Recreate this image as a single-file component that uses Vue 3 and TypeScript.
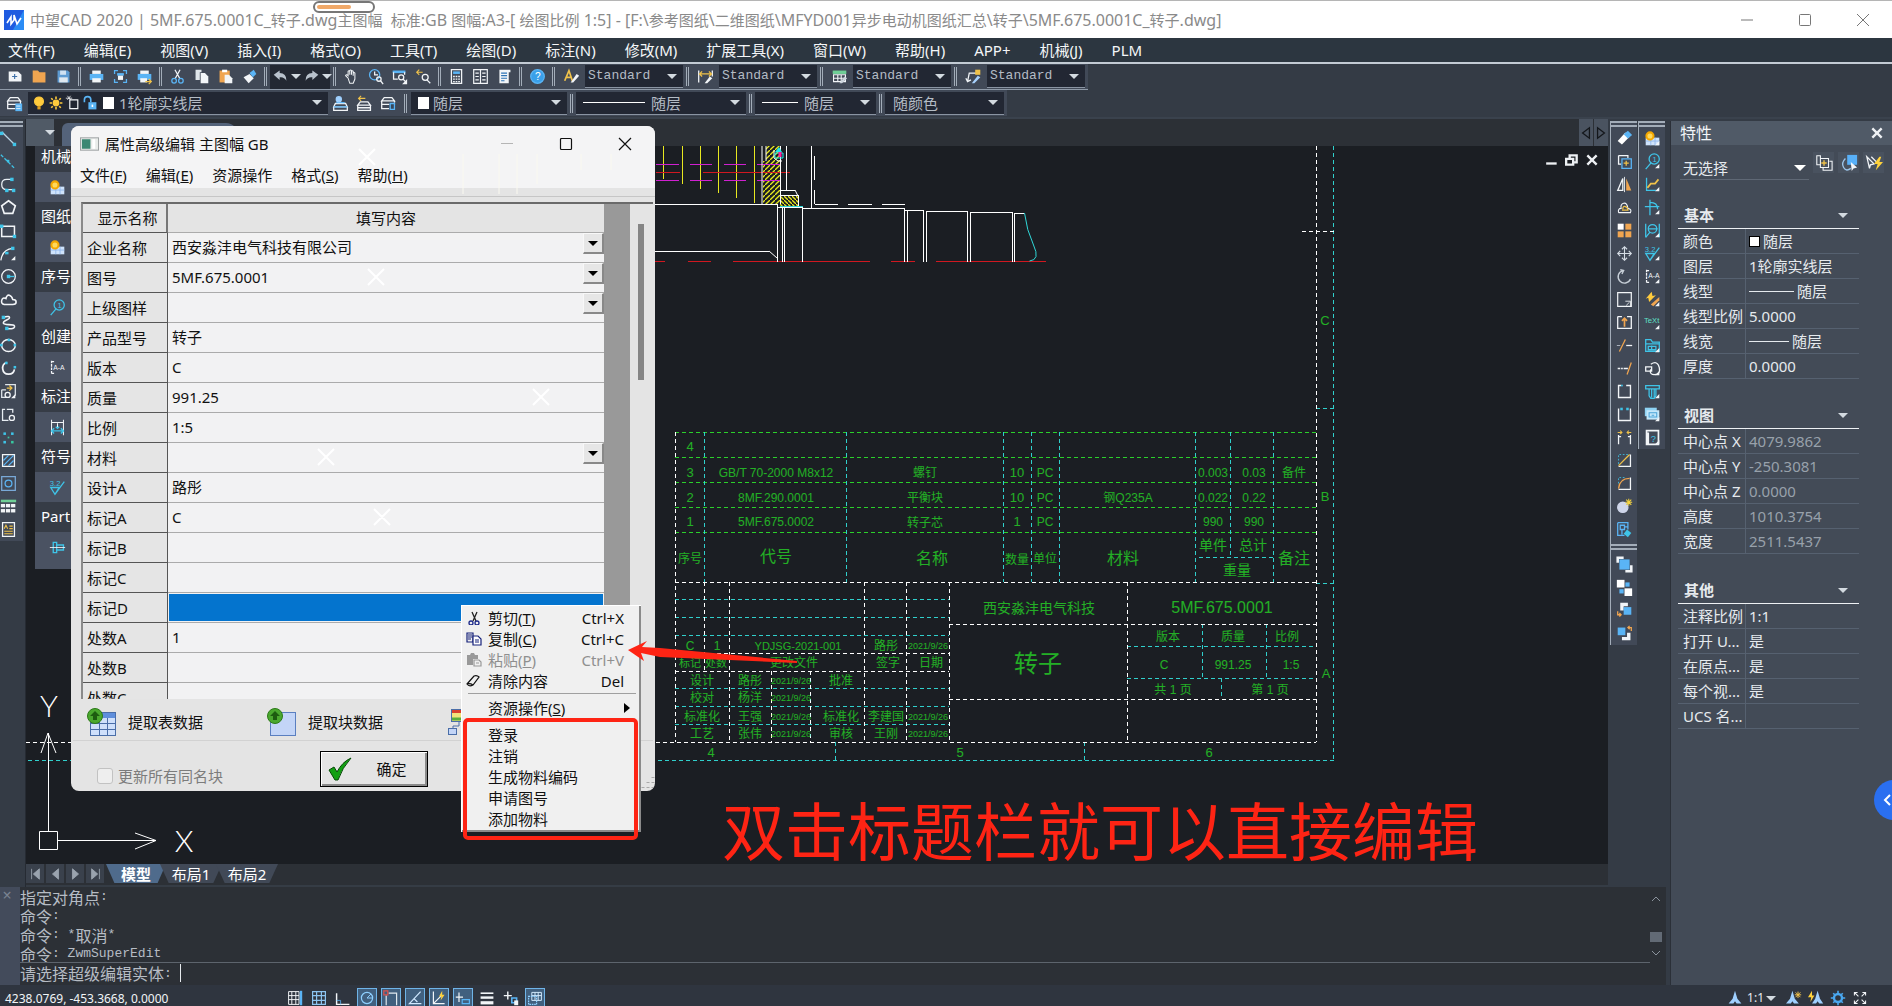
<script setup lang="ts">
import { ref } from 'vue'

type Line = [number, number, number, number]
type Label = [number, number, string, number?]

const W = '#f2f5f8'
const B = '#5ab4f5'
const C = '#3fc4e8'
const Y = '#f0c24a'
const O = '#f0a550'
const G = '#b9c2cc'

const s = (d: string, c = W, w = 1.5) => `<path d="${d}" fill="none" stroke="${c}" stroke-width="${w}"/>`
const f = (d: string, c = W) => `<path d="${d}" fill="${c}"/>`
const o = (x: number, y: number, r: number, c = W, fill = 'none', w = 1.5) =>
  `<circle cx="${x}" cy="${y}" r="${r}" fill="${fill}" stroke="${c}" stroke-width="${w}"/>`
const q = (x: number, y: number, w: number, h: number, c = W) => `<rect x="${x}" y="${y}" width="${w}" height="${h}" fill="${c}"/>`
const t = (x: number, y: number, n: string, c: string, z = 8) =>
  `<text x="${x}" y="${y}" font-size="${z}" font-family="Liberation Sans, sans-serif" fill="${c}">${n}</text>`
const more = f('M18 13v5h-5z')

const sheets = q(2, 9, 16, 9, '#cfe3fb') + s('M8 9v9M2 13h16M13 9v9', '#8fb6ea', 1) + o(7, 7, 4.2, '#f5a800', '#ffd95c', 2.4)

const icons: Record<string, string> = {
  new: f('M2 4h11l4 4v8H2z') + s('M9 7v6M6 10h6', '#3d6fa8', 1.3),
  open: f('M2 3h6l2 2h7v12H2z', O),
  save: f('M3 3h12l2 2v12H3z', '#5e9bd2') + q(6, 3, 7, 5, '#cfe1f2') + q(5, 11, 10, 6, '#dfe8f0'),
  print: q(5, 3, 10, 4, W) + q(2, 7, 16, 7, B) + q(5, 12, 10, 5, W),
  preview: s('M3 7V3h4M13 3h4v4M17 13v4h-4M7 17H3v-4', B) + q(6, 6, 8, 3, B) + q(7, 9, 6, 5, W),
  publish: q(5, 3, 10, 4, W) + q(2, 7, 16, 7, B) + q(5, 12, 8, 5, W) + s('M11 16h7M15 13l3 3-3 3', Y),
  cut: s('M7 2l6 11M13 2L7 13', W) + o(6, 15, 2.7, B) + o(14, 15, 2.7, B),
  copy: f('M3 2h7v3H8v9H3z', '#dfe5ea') + f('M9 6h5l4 4v8H9z'),
  paste: q(3, 3, 12, 14, O) + q(6, 2, 6, 3, '#fff') + f('M9 8h5l4 4v6H9z'),
  brush: f('M3 11l7-4 5 5-6 6z') + f('M10 6l5-4 3 5-4 4z', B),
  undo: f('M2 8l7-5v3q8 0 8 9-3-5-8-4v3z', G),
  redo: f('M18 8l-7-5v3q-8 0-8 9 3-5 8-4v3z', G),
  hand: s('M6 12L3 9q1-2 3 0V4q1-1.500 2 0v4V3q1-1.500 2 0v5V4q1-1.500 2 0v5V6q1-1.500 2 0v7l-2 5H8z', W, 1.2),
  zoomrt: o(9, 8, 6, B) + s('M9 4v4h4', W) + o(14, 13, 2.600) + s('M16 15l3 4'),
  zoomwin: q(2, 3, 15, 3, B) + s('M3 5v8h5M16 5v3') + o(12, 11, 3) + s('M14 13l3 3') + f('M19 13v6h-6z'),
  zoomprev: s('M2 5h7M5 2L2 5l3 3', Y, 1.3) + o(12, 11, 3.500) + s('M14 14l4 4'),
  calc: s('M4 2h12v16H4z') + q(6, 4, 8, 3, B) + s('M6 10h8M6 13h8M6 16h8', W, 1.500).replace('/>', ' stroke-dasharray="2 1"/>'),
  grid: s('M2 2h16v16H2zM10 2v16M4 6h4M4 10h4M4 14h4M12 6h4M12 10h4M12 14h4', W, 1.400),
  sheet: f('M4 2h13v3H15v13H4z') + s('M6 6h7M6 9h7M6 12h7M6 15h4', '#2e74b5', 1.300),
  help: o(10, 10, 8, B, '#3aa0ea') + t(7, 14, '?', '#fff', 12),
  textstyle: s('M2 15L7 3l4 12M4 11h6', Y, 2) + f('M9 17l7-10 3 2-7 8z'),
  dimstyle: s('M2 3v14M18 3v7') + s('M3 7h14M6 4L3 7l3 3M14 4l3 3-3 3', Y) + f('M9 18l6-8 3 2-6 6z'),
  tablestyle: q(2, 3, 16, 4, '#6fcf97') + s('M3 8h14v8H3zM3 12h14M8 8v8M12 8v8', W, 1.300) + f('M10 18l6-8 3 2-6 6z', '#cdd5dd'),
  leaderstyle: s('M3 16L5 6h8M1 12l2 4 4-2') + q(12, 2, 6, 6, Y) + f('M8 18l7-9 3 2-7 7z', '#a9d3ff'),
  layers: s('M5 3h9l3 4H2zM2 7v4h15V7M2 11v5h9') + q(11, 10, 8, 9, B) + s('M12 13h5M12 16h5', W, 1),
  bulb: o(10, 8, 5.500, '#ffcb3d', '#ffcb3d') + q(8, 14, 4, 4, '#e0a020'),
  sun: o(10, 10, 3.500, '#ffcb3d', '#ffcb3d') + s('M10 2v3M10 15v3M2 10h3M15 10h3M4 4l2 2M14 14l2 2M16 4l-2 2M4 16l2-2', '#ffcb3d', 2),
  frame: s('M6 6h10v11H6z', W) + s('M3 1l4 5M7 1L3 6M1 4h8', W, 1),
  unlock: s('M3 9V6q0-4 4-4t4 4v3', B, 2) + q(8, 9, 10, 9, B) + q(12, 12, 2, 3, '#fff'),
  lay1: s('M4 10h12l2 4H2zM2 14v4h16v-4') + s('M5 9h10M2 14h16', B) + o(8, 5, 3, '#9fd0ff', '#9fd0ff'),
  lay2: s('M5 8h9l3 4H2zM2 12v6h15v-6M2 15h15') + s('M3 4h8M6 1L3 4l3 3', Y, 1.300),
  lay3: s('M5 3h9l3 4H2zM2 7v4h15V7M2 11v5h9') + q(11, 9, 7, 9, '#39485a') + s('M12 10h5v7h-5z', B),
  line: s('M2 2l16 16', '#b9d3e4') + q(0, 2, 4, 4, C) + q(15, 15, 4, 4, C),
  xline: s('M1 2l17 17', C).replace('/>', ' stroke-dasharray="4 2"/>') + q(8, 8, 3, 3, C),
  pline: s('M13 4H8q-6 0-6 6t6 6h7', '#e8eef3') + q(12, 2, 4, 4, C) + q(6, 15, 4, 4, C) + q(14, 15, 4, 4, C),
  polygon: s('M10 2l8 6-3 9H5L2 8z', W, 2),
  rect: s('M2 5h15v12H2z', W, 1.800) + q(0, 3, 4, 4, C) + q(15, 15, 4, 4, C),
  arc: s('M1 18Q3 5 15 4') + q(13, 2, 4, 4, C) + q(6, 8, 4, 3, C) + more,
  circle: o(10, 10, 8) + s('M10 10h7', C) + q(8, 8, 4, 4, C),
  cloud: s('M5 16q-4-1-3-5t5-2q1-5 4-4t4 5q4 0 4 3t-4 3z', W, 1.800),
  spline: s('M4 4c5-2 8-1 7 1S3 8 4 11s12 0 13 3-4 4-9 3', W, 1.800) + q(2, 2, 4, 4, C) + q(6, 15, 4, 4, C),
  ellipse: s('M2 10a8 7 0 1 0 16 0a8 7 0 1 0-16 0', W, 1.800) + q(0, 8, 3, 3, C) + q(16, 8, 3, 3, C) + q(9, 2, 3, 3, C),
  earc: s('M8 3a7 7 0 1 0 9 8', W, 2) + q(16, 7, 3, 3, C) + q(6, 2, 3, 3, C),
  insert: s('M6 2h12v13M2 8h5M2 8v9h6', '#dfe5ea') + o(9, 14, 3) + s('M8 6h6M11 3l3 3-3 3', Y) + more,
  block: s('M6 4H3v13h7M8 4h7v4', '#e8eef3') + o(14, 14, 3),
  point: q(4, 4, 3, 3, C) + q(13, 4, 3, 3, C) + q(9, 9, 2, 2, '#38c7a0') + q(4, 14, 3, 3, C) + q(13, 14, 3, 3, '#38c7a0'),
  hatch: s('M3 3h14v14H3z') + s('M4 10l6-6M4 16L16 4M10 16l6-6', B),
  region: s('M2 2h16v16H2z', '#79a9d8') + o(10, 10, 4, B),
  table: q(1, 2, 18, 3, '#6fcf97') + [1, 7, 13].map(x => q(x, 7, 5, 4) + q(x, 13, 5, 4)).join(''),
  mtext: s('M3 2h14v16H3z') + s('M5 9l2-4 2 4M11 6h4M11 9h4M5 12h10M5 15h10', Y, 1.300),
  sheets,
  sheetsMore: sheets + more,
  balloon: o(12, 7, 6, C) + s('M8 12l-6 7', C) + t(10, 10, '1', C, 9),
  balloonMore: o(12, 7, 6, C) + s('M8 12l-6 7', C) + t(10, 10, '1', C, 9) + more,
  section: s('M3 2v16M3 3h4M3 17h4', W).replace('/>', ' stroke-dasharray="3 1"/>') + t(5, 13, 'A-A', W, 8),
  dims: s('M3 1v18M17 1v18', W, 1.200) + s('M3 4h14M10 5v6', W, 1.200) + s('M3 14h14M6 11l-3 3 3 3M14 11l3 3-3 3M8 9l2 2 2-2', C, 1.600),
  rough: t(1, 8, '3.2', C, 9) + s('M2 10h10l-5 8zM7 18L18 3', C, 1.500),
  roughMore: t(1, 8, '3.2', C, 9) + s('M2 10h10l-5 8zM7 18L18 3', C, 1.500) + more,
  bolt: s('M5 4h4v12H5zM9 7h8v6H9z', C, 1.600) + s('M1 10h18', W, 1),
  erase: f('M2 13l9-10 5 5-9 9z', '#fff') + f('M9 5l5-4 5 5-5 4z', B),
  copyobj: s('M3 3h11v3M3 3v10h3', W) + s('M7 7h11v11H7z', B) + s('M12 9v6M9 12h6', Y),
  mirror: s('M8 3v14H2z', W) + f('M12 3v14h6z', O) + s('M10 1v18', W, 1),
  offset: s('M3 16h14q2-4-3-5Q13 4 9 5t-3 6q-4 0-3 5', W, 1.300) + s('M7 13h7q0-3-3-4t-3 3', Y),
  array: q(2, 2, 7, 7, '#fff') + q(11, 2, 7, 7, O) + q(2, 11, 7, 7, O) + q(11, 11, 7, 7, O),
  move: s('M10 2v16M2 10h16M7 5l3-3 3 3M7 15l3 3 3-3M5 7l-3 3 3 3M15 7l3 3-3 3', '#d5dde5', 1.300),
  rotate: s('M8 3a7.500 7.500 0 1 0 9 10M5 2l4 1-2 4', '#c8d0d8', 1.600),
  scale: s('M2 2h16v16H2z', W, 1.400) + s('M11 12h6v6M12 17l4-4', W, 1),
  stretch: s('M2 3h5M13 3h5v14H2V3', W, 1.500) + s('M10 15V5M7 8l3-3 3 3', O, 2),
  trim: s('M4 17L11 3', O) + s('M12 10h7') + s('M1 10h4', G, 1),
  extend: s('M13 17l5-14', O) + s('M2 10h3M6 10h2M9 10h5'),
  brk: s('M6 3H3v14h14V3h-5', W, 1.600) + q(6, 2, 2, 2, C),
  brk2: s('M3 3v14h14V3', W, 1.600) + q(5, 2, 3, 3, C) + q(12, 2, 3, 3, C),
  join: s('M3 7v11M17 7v11M3 9h3M14 9h3', W) + s('M2 4h5M5 2l2 2-2 2M18 4h-5M15 2l-2 2 2 2', Y, 1.200),
  chamfer: s('M3 17h14V3') + s('M3 16L16 3', Y) + s('M3 14V3h11', C, 1).replace('/>', ' stroke-dasharray="2 2"/>'),
  fillet: s('M3 17h14V3') + s('M3 16Q4 4 16 4', O) + s('M3 10V3h8', C, 1).replace('/>', ' stroke-dasharray="2 2"/>'),
  explode: o(8, 11, 6, '#cfd6ea', '#cfd6ea') + s('M12 2l6 6M18 2l-6 6M15 1v8M11 5h8', '#f5d440', 1.200),
  edit: s('M2 2h12v8M2 2v15h8M5 5h5v5H5zM10 7h4M7 10v6', B) + f('M13 10l5 4-4 5-5-4z', C),
  front: s('M2 8V2h7M18 11v7h-7', W, 3) + q(4, 4, 12, 12, B),
  back: q(1, 1, 9, 9, '#fff') + q(10, 11, 9, 9, '#fff') + q(11, 4, 5, 5, B) + q(4, 12, 5, 5, B),
  above: f('M5 1h9v4H9v5H5z') + q(9, 6, 9, 9, B) + s('M2 11v4h4M4 17l2-2-2-2', O),
  below: q(2, 3, 9, 9, B) + f('M13 9h4v9H7v-4h6z') + s('M14 3h4v4M16 1l-2 2 2 2', O),
  axes: s('M3 2v15h11', C) + s('M4 14l4-5h5l4-5', Y, 2) + more,
  cline: s('M7 1v18M1 9h17M7 4q9 0 9 8', C) + more,
  detail: s('M2 2v16M18 2v16', C) + o(10, 8, 5, C) + s('M2 18l5-6M5 8h11', C) + more,
  sectMore: s('M3 2v16M3 3h4M3 17h4', W).replace('/>', ' stroke-dasharray="3 1"/>') + t(5, 12, 'A-A', W, 8) + more,
  quick: f('M2 9l7-8 1 5 4-1-8 8-1-5z', '#ffcb3d') + f('M8 16L18 7v4l-7 7z', O) + more,
  text: t(0, 10, 'TeXt', '#5fe0c8', 9) + more,
  folder: s('M2 3h6l2 3h8v11H2zM2 8h16M5 11h9v4H5zM9 10v6', C) + more,
  ring: s('M2 8h7v5H2zM8 5q8-5 10 4t-8 8q-4-2-2-6', W) + more,
  screw: s('M2 3h16v4H2zM4 7h12M6 7v8l2 3h4l2-3V7M9 7v10M12 7v10', C) + more,
  cards: q(1, 2, 14, 10, '#8fd3f4') + q(3, 5, 15, 11, '#c3e8fa') + s('M6 8h9v5H6zM9 11h3', '#4aa3d8', 1.200) + more,
  qbook: s('M3 2h14v16H3zM5 4v14', W, 2) + t(8, 15, '?', C, 11) + more,
  pick1: s('M6 5V2H2v10h4M6 5h9v10H6zM16 8h3v10H9v-3', W, 1.200) + s('M10 7v6M7 10h6', Y),
  pick2: q(8, 1, 11, 11, '#58b0f8') + s('M6 5Q1 10 4 15t8 1', '#9cc4e8') + f('M12 9l7 6-4 1-2 3z'),
  pick3: s('M2 3l8 8-4 1-1 4zM7 3l6 6', W, 1.400) + f('M16 3l-6 8h4l-2 7 8-9h-4l2-6z', '#ffd23c'),
  stGrid: s('M2 2h13v16H2zM2 7h13M2 12h13M6 2v16M11 2v16', W, 1.200) + q(16, 1, 3, 18, B),
  stSnap: s('M2 2h16v16H2zM2 7h16M2 13h16M7 2v16M13 2v16', '#8cc4f0', 1.500),
  stOrtho: s('M2 4v14h16', W, 1.800) + s('M2 13h5v5', B, 1),
  stPolar: o(10, 10, 7, '#8fd0ff') + s('M10 10l5-5M10 10h7', '#8fd0ff', 1.200),
  stSnap2: s('M7 4h10v15M4 7v12', '#dfe8ef') + s('M1 1h5v5H1z', '#e0504a'),
  stTrack: s('M17 2L3 17h15M9 11l4 4', '#cfe8ff'),
  stDucs: s('M3 2v15h14M3 17L13 7', W) + f('M14 1l-4 7h3l-1 5 5-7h-3z', '#ffd23c'),
  stDyn: s('M5 3v12M1 9h9', W) + s('M9 12h9v5H9z', B),
  stLwt: q(2, 3, 16, 2) + q(2, 8, 16, 3) + q(2, 14, 16, 4),
  stQp: s('M6 2v10M1 7h10', W, 1.800) + s('M11 10h6v6h-6z', B, 2) + q(14, 13, 5, 6),
  stSel: s('M6 3h12v10H6zM6 7h12M10 3v10M14 3v10', '#d5ecff', 1.200) + s('M2 8h10v10H2z', '#8fd0ff').replace('/>', ' stroke-dasharray="2 1"/>'),
  person: f('M10 1l3 10 5 6h-6l-2-3-2 3H2l5-6z', '#9fd0ff'),
  person2: f('M8 1l3 10 5 6h-6l-2-3-2 3H0l5-6z', '#9fd0ff') + s('M15 2v8M11 6h8M12 3l6 6M18 3l-6 6', Y, 1.200),
  person3: f('M12 1l3 10 4 6h-5l-2-3-2 3H5l4-6z', '#9fd0ff') + f('M5 1L0 9h4l-1 6 5-8H5z', '#ffd23c'),
  gear: o(10, 10, 5, '#4aa8f0', 'none', 3) + s('M10 1v4M10 15v4M1 10h4M15 10h4M4 4l2 2M14 14l2 2M16 4l-2 2M4 16l2-2', '#4aa8f0', 2),
  expand: s('M3 7V3h4M13 3h4v4M17 13v4h-4M7 17H3v-4M3 3l5 5M17 3l-5 5M17 17l-5-5M3 17l5-5', W, 1.300),
}

const menus = ['文件(F)', '编辑(E)', '视图(V)', '插入(I)', '格式(O)', '工具(T)', '绘图(D)', '标注(N)', '修改(M)', '扩展工具(X)', '窗口(W)', '帮助(H)', 'APP+', '机械(J)', 'PLM']
const groupsA = [['new', 'open', 'save'], ['print', 'preview', 'publish'], ['cut', 'copy', 'paste', 'brush']]
const groupsB = [['hand', 'zoomrt', 'zoomwin', 'zoomprev'], ['calc', 'grid', 'sheet'], ['help']]
const styles = [
  { icon: 'textstyle', name: '文字样式' },
  { icon: 'dimstyle', name: '标注样式' },
  { icon: 'tablestyle', name: '表格样式' },
  { icon: 'leaderstyle', name: '引线样式' },
]
const drawTools = ['line', 'xline', 'pline', 'polygon', 'rect', 'arc', 'circle', 'cloud', 'spline', 'ellipse', 'earc', 'insert', 'block', 'point', 'hatch', 'region', 'table', 'mtext']
const modifyTools = ['erase', 'copyobj', 'mirror', 'offset', 'array', 'move', 'rotate', 'scale', 'stretch', 'trim', 'extend', 'brk', 'brk2', 'join', 'chamfer', 'fillet', 'explode', 'edit']
const orderTools = ['front', 'back', 'above', 'below']
const mechTools = ['sheetsMore', 'balloonMore', 'axes', 'cline', 'detail', 'roughMore', 'sectMore', 'quick', 'text', 'folder', 'ring', 'screw', 'cards', 'qbook']
const mechPalette: [string, string][] = [['机械', 'sheets'], ['图纸', 'sheets'], ['序号', 'balloon'], ['创建', 'section'], ['标注', 'dims'], ['符号', 'rough'], ['Part', 'bolt']]

const props = [
  { title: '基本', dim: false, rows: [['颜色', '随层', 'swatch'], ['图层', '1轮廓实线层'], ['线型', '随层', 'line'], ['线型比例', '5.0000'], ['线宽', '随层', 'thin'], ['厚度', '0.0000']] },
  { title: '视图', dim: true, rows: [['中心点 X', '4079.9862'], ['中心点 Y', '-250.3081'], ['中心点 Z', '0.0000'], ['高度', '1010.3754'], ['宽度', '2511.5437']] },
  { title: '其他', dim: false, rows: [['注释比例', '1:1'], ['打开 U...', '是'], ['在原点...', '是'], ['每个视...', '是'], ['UCS 名...', '']] },
]

const fields = ref([
  { k: '企业名称', v: '西安淼沣电气科技有限公司', d: true },
  { k: '图号', v: '5MF.675.0001', d: true },
  { k: '上级图样', v: '', d: true },
  { k: '产品型号', v: '转子' },
  { k: '版本', v: 'C' },
  { k: '质量', v: '991.25' },
  { k: '比例', v: '1:5' },
  { k: '材料', v: '', d: true },
  { k: '设计A', v: '路彤' },
  { k: '标记A', v: 'C' },
  { k: '标记B', v: '' },
  { k: '标记C', v: '' },
  { k: '标记D', v: '', on: true },
  { k: '处数A', v: '1' },
  { k: '处数B', v: '' },
  { k: '处数C', v: '' },
] as { k: string; v: string; d?: boolean; on?: boolean }[])

const dlgMenus: [string, string][] = [['文件', 'F'], ['编辑', 'E'], ['资源操作', ''], ['格式', 'S'], ['帮助', 'H']]
const ctxTop: [string, string, string, string][] = [['剪切', 'T', 'Ctrl+X', 'cut'], ['复制', 'C', 'Ctrl+C', 'copy'], ['粘贴', 'P', 'Ctrl+V', 'paste'], ['清除内容', '', 'Del', 'clear']]
const ctxIcons: Record<string, string> = {
  cut: s('M6 1l4 9M11 1L7 10', '#222', 1.300) + o(5, 12, 2, '#1d2a8a', 'none', 1.300) + o(11, 12, 2, '#1d2a8a', 'none', 1.300),
  copy: s('M1 1h6v9H1zM2 3h4M2 5h4M2 7h3', '#16227a', 1.200) + `<path d="M7 4h5l3 3v6H7z" fill="#fff" stroke="#16227a" stroke-width="1.200"/>` + s('M9 8h4M9 10h4', '#16227a', 1),
  paste: f('M1 2h3l1-2h3l1 2h3v4H7v6H1z', '#999') + s('M8 7h5l2 2v4H8zM10 10h3', '#999', 1.200),
  clear: s('M1 10l7-8q3-1 5 1l-6 8q-4 2-6-1zM1 10q3-1 6 1', '#111', 1.200),
}
const ctxBottom = ['登录', '注销', '生成物料编码', '申请图号', '添加物料']

const caption = '中望CAD 2020 | 5MF.675.0001C_转子.dwg主图幅  标准:GB 图幅:A3-[ 绘图比例 1:5] - [F:\\参考图纸\\二维图纸\\MFYD001异步电动机图纸汇总\\转子\\5MF.675.0001C_转子.dwg]'
const log = ['指定对角点:', '命令:', '命令: *取消*', '命令: ZwmSuperEdit']
const runs = (x: string) => x.match(/[\u4e00-\u9fff]+|[^\u4e00-\u9fff]+/g) ?? []
const isHan = (x: string) => /[\u4e00-\u9fff]/.test(x)
const command = ref('')

const statusIcons: [string, boolean][] = [['stGrid', false], ['stSnap', false], ['stOrtho', false], ['stPolar', true], ['stSnap2', true], ['stTrack', true], ['stDucs', true], ['stDyn', true], ['stLwt', false], ['stQp', false], ['stSel', true]]

const path = (ls: Line[]) => ls.map(l => `M${l[0]} ${l[1]}L${l[2]} ${l[3]}`).join('')
const h = (y: number, a: number, b: number): Line => [a, y, b, y]
const v = (x: number, a: number, b: number): Line => [x, a, x, b]

const dashWhite = path([h(742.5, 26, 1316), v(1316.5, 146, 742), h(231.5, 1302, 1334), v(675.5, 432, 742), h(582.5, 675, 1316),
  v(704.5, 582, 671), v(729.5, 582, 742), v(864.5, 582, 742), v(906.5, 582, 742), v(949.5, 582, 742), v(771.5, 671, 742), v(810.5, 671, 742),
  h(653.5, 675, 949), h(671.5, 675, 949), h(624.5, 949, 1316), h(699.5, 949, 1316), v(1127.5, 582, 742)])
const dashCyan = path([h(760.5, 28, 1334), v(1333.5, 146, 760), h(408.5, 1316, 1334), h(583.5, 1316, 1334), v(835.5, 742, 760), v(1084.5, 742, 760),
  ...[704, 846, 1003, 1031, 1059, 1195, 1273].map(x => v(x + 0.5, 432, 582)), v(1230.5, 432, 557), h(557.5, 1199, 1273),
  ...[599, 617, 635, 688, 706, 724].map(y => h(y + 0.5, 675, 949)), h(646.5, 1127, 1316), h(678.5, 1127, 1316), v(1202.5, 624, 678), v(1266.5, 624, 678), v(1221.5, 678, 699)])
const dashGreen = path([432, 457, 482, 507, 532].map(y => h(y + 0.5, 675, 1316)))

const white = path([h(204.5, 655, 777), v(762, 146, 204), v(780.5, 146, 204), v(786.5, 146, 190), h(190.5, 780, 795), [795, 190, 798, 196], h(195.5, 780, 798), v(798.5, 195, 207),
  v(811.5, 146, 208), v(814.5, 156, 180), v(814.5, 190, 204), h(204.5, 815, 838), h(204.5, 848, 872), h(204.5, 882, 905), v(777.5, 204, 262), h(207.5, 777, 803), v(782.5, 207, 262),
  v(784.5, 207, 262), v(802.5, 207, 262), h(208.5, 802, 904), v(904.5, 208, 262), v(907.5, 211, 262), h(210.5, 904, 923), v(923.5, 210, 262), v(926.5, 211, 262), h(211.5, 926, 967),
  v(967.5, 211, 262), v(970.5, 212, 262), h(212.5, 970, 1012), v(1012.5, 212, 262), v(1014.5, 213, 262), h(213.5, 1014, 1024), h(251.5, 650, 769), [769, 251, 777, 258]])
const yellow = path([v(663.5, 146, 179), v(682.5, 146, 184), v(700.5, 146, 189), v(718.5, 146, 193), v(736.5, 146, 198), v(754.5, 146, 203)])
const magenta = path([164.5, 180.5].flatMap(y => [h(y, 656, 679), h(y, 690, 712), h(y, 724, 746), h(y, 757, 781)]))
const red = path([h(172.5, 656, 680), h(172.5, 703, 790), h(261.5, 655, 665), h(261.5, 688, 711), h(261.5, 733, 870), h(261.5, 891, 915), h(261.5, 936, 1046)])

const labels: Label[] = [
  [690, 451, '4'], [690, 477, '3'], [690, 502, '2'], [690, 526, '1'], [690, 563, '序号', 12],
  [776, 477, 'GB/T 70-2000 M8x12', 12], [776, 502, '8MF.290.0001', 12], [776, 526, '5MF.675.0002', 12], [776, 562, '代号', 16],
  [925, 477, '螺钉', 12], [925, 502, '平衡块', 12], [925, 527, '转子芯', 12], [932, 564, '名称', 16],
  [1017, 477, '10'], [1045, 477, 'PC', 12], [1017, 502, '10'], [1045, 502, 'PC', 12], [1017, 526, '1'], [1045, 526, 'PC', 12], [1017, 564, '数量', 12], [1045, 563, '单位', 12],
  [1128, 502, '钢Q235A', 12], [1123, 564, '材料', 16],
  [1213, 477, '0.003', 12], [1254, 477, '0.03', 12], [1294, 477, '备件', 12], [1213, 502, '0.022', 12], [1254, 502, '0.22', 12], [1213, 526, '990', 12], [1254, 526, '990', 12],
  [1213, 550, '单件', 14], [1253, 550, '总计', 14], [1237, 575, '重量', 14], [1294, 564, '备注', 16],
  [1039, 613, '西安淼沣电气科技', 14], [1222, 613, '5MF.675.0001', 16], [1038, 672, '转子', 24],
  [1168, 641, '版本', 12], [1233, 641, '质量', 12], [1287, 641, '比例', 12], [1164, 669, 'C', 12], [1233, 669, '991.25', 12], [1291, 669, '1:5', 12], [1173, 694, '共 1 页', 12], [1270, 694, '第 1 页', 12],
  [690, 650, 'C', 12], [717, 650, '1', 12], [798, 650, 'YDJSG-2021-001', 11], [886, 650, '路彤', 12], [928, 649, '2021/9/26', 9],
  [690, 667, '标记', 11], [716, 667, '处数', 11], [794, 667, '更改文件', 12], [888, 667, '签字', 12], [931, 667, '日期', 12],
  [702, 685, '设计', 12], [750, 685, '路彤', 12], [791, 684, '2021/9/26', 9], [841, 685, '批准', 12],
  [702, 702, '校对', 12], [750, 702, '杨洋', 12], [791, 701, '2021/9/26', 9],
  [702, 721, '标准化', 12], [750, 721, '王强', 12], [791, 720, '2021/9/26', 9], [841, 721, '标准化', 12], [886, 721, '李建国', 12], [928, 720, '2021/9/26', 9],
  [702, 738, '工艺', 12], [750, 738, '张伟', 12], [791, 737, '2021/9/26', 9], [841, 738, '审核', 12], [886, 738, '王刚', 12], [928, 737, '2021/9/26', 9],
  [711, 757, '4'], [960, 757, '5'], [1209, 757, '6'], [1325, 325, 'C'], [1325, 501, 'B'], [1326, 678, 'A'],
]
</script>

<template>
  <div class="app">
    <header class="title">
      <svg class="logo" viewBox="0 0 20 20"><rect width="20" height="20" fill="#1f5be0" /><path d="M20 0v20H9z" fill="#2b8cf5" /><path d="M3 13l4-6v7l3-4v-5l3 9 4-6" fill="none" stroke="#fff" stroke-width="1.6" /></svg>
      <span><span v-for="(r, i) in runs(caption)" :key="i" :class="{ cjk: isHan(r) }">{{ r }}</span></span>
      <div class="winbtns">
        <button aria-label="最小化"><svg viewBox="0 0 14 14"><path d="M1 7h12" /></svg></button>
        <button aria-label="最大化"><svg viewBox="0 0 14 14"><rect x="1.500" y="1.500" width="11" height="11" rx="1" /></svg></button>
        <button aria-label="关闭"><svg viewBox="0 0 14 14"><path d="M1 1l12 12M13 1L1 13" /></svg></button>
      </div>
      <div class="pill"><i></i></div>
    </header>

    <nav class="menubar"><button v-for="m in menus" :key="m">{{ m }}</button></nav>

    <div class="bars">
      <div class="bar">
        <template v-for="(g, i) in groupsA" :key="i">
          <button v-for="n in g" :key="n" class="tb" :aria-label="n"><svg viewBox="0 0 20 20" v-html="icons[n]" /></button>
          <i class="sep"></i>
        </template>
        <div class="history">
          <button aria-label="撤销"><svg viewBox="0 0 20 20" v-html="icons.undo" /></button><i class="tri"></i>
          <button aria-label="重做"><svg viewBox="0 0 20 20" v-html="icons.redo" /></button><i class="tri"></i>
        </div>
        <template v-for="(g, i) in groupsB" :key="i">
          <i class="sep"></i>
          <button v-for="n in g" :key="n" class="tb" :aria-label="n"><svg viewBox="0 0 20 20" v-html="icons[n]" /></button>
        </template>
        <template v-for="st in styles" :key="st.icon">
          <i class="sep"></i>
          <button class="tb wide" :aria-label="st.name"><svg viewBox="0 0 20 20" v-html="icons[st.icon]" /></button>
          <div class="combo std"><select :aria-label="st.name"><option>Standard</option></select><i class="tri"></i></div>
        </template>
      </div>
      <div class="bar">
        <button class="tb wide" aria-label="图层特性"><svg viewBox="0 0 20 20" v-html="icons.layers" /></button>
        <div class="combo layer">
          <svg v-for="n in ['bulb', 'sun', 'frame', 'unlock']" :key="n" viewBox="0 0 20 20" v-html="icons[n]" />
          <i class="sw"></i>
          <select aria-label="图层"><option>1轮廓实线层</option></select><i class="tri"></i>
        </div>
        <button v-for="n in ['lay1', 'lay2', 'lay3']" :key="n" class="tb" :aria-label="n"><svg viewBox="0 0 20 20" v-html="icons[n]" /></button>
        <i class="sep far"></i>
        <div class="combo color"><i class="sw"></i><select aria-label="颜色"><option>随层</option></select><i class="tri"></i></div>
        <i class="sep"></i>
        <div class="combo ltype"><i class="ln"></i><select aria-label="线型"><option>随层</option></select><i class="tri"></i></div>
        <i class="sep"></i>
        <div class="combo lwt"><i class="ln short"></i><select aria-label="线宽"><option>随层</option></select><i class="tri"></i></div>
        <i class="sep"></i>
        <div class="combo plot"><select aria-label="打印样式"><option>随颜色</option></select><i class="tri"></i></div>
      </div>
    </div>

    <main class="main">
      <div class="left">
        <div class="work">
          <div class="dock">
            <div class="strip draw"><button v-for="n in drawTools" :key="n" :aria-label="n"><svg viewBox="0 0 20 20" v-html="icons[n]" /></button></div>
          </div>
          <div class="center">
            <div class="docbar">
              <button class="dd" aria-label="文档列表"><i class="tri"></i></button>
              <button class="doctab" aria-label="当前图纸"></button>
              <div class="arrows"><button aria-label="向左"><svg viewBox="0 0 14 16"><path d="M11 2v12L3 8z" /></svg></button><button aria-label="向右"><svg viewBox="0 0 14 16"><path d="M3 2v12l8-6z" /></svg></button></div>
            </div>
            <div class="canvas">
              <svg class="drawing" viewBox="26 146 1582 718" width="1582" height="718">
                <defs>
                  <pattern id="hatch" width="5" height="5" patternUnits="userSpaceOnUse"><path d="M-1 6L6 -1" stroke="#e8e820" stroke-width="1.300" /></pattern>
                  <pattern id="hatch2" width="4" height="4" patternUnits="userSpaceOnUse"><path d="M-1 -1L5 5" stroke="#e8e820" stroke-width="1.300" /></pattern>
                </defs>
                <g fill="none" stroke-width="1">
                  <path d="M766 146h14v58h-17v-43h3z" fill="url(#hatch)" />
                  <path d="M780 195h18v12h-18z" fill="url(#hatch2)" />
                  <path :d="yellow" stroke="#e8e820" />
                  <path :d="magenta" stroke="#d020d0" />
                  <path :d="red" stroke="#d01820" />
                  <path :d="white" stroke="#fff" />
                  <path d="M766 146v15M774 150v8l4 3h4" stroke="#fff" />
                  <path d="M775 152l4-5 3 5z" fill="#20e8e8" /><path d="M775 153h8v5h-8z" stroke="#20e8e8" /><path d="M780 152v5" stroke="#ff20a0" stroke-width="3" />
                  <path d="M780 206.500h23M1024.500 213q2 17 9 32t-4 16" stroke="#30d8d8" />
                  <g stroke-dasharray="4 3">
                    <path :d="dashGreen" stroke="#2bd02b" /><path :d="dashCyan" stroke="#30d0cc" /><path :d="dashWhite" stroke="#fff" />
                  </g>
                  <path d="M39.500 831.500h18v18h-18zM48.500 831V733M41 753l7-20 8 20M58 840.500h98M135 833l21 7.500-21 8.500" stroke="#fff" />
                </g>
                <g class="cadtext"><text v-for="(l, i) in labels" :key="i" :x="l[0]" :y="l[1]" :font-size="l[3] ?? 13">{{ l[2] }}</text></g>
                <g class="axis"><text x="49" y="717">Y</text><text x="184" y="852">X</text></g>
              </svg>
              <div class="docbtns">
                <button aria-label="最小化"><svg viewBox="0 0 12 12"><path d="M1 9h9" /></svg></button>
                <button aria-label="还原"><svg viewBox="0 0 12 12"><path d="M1 5h6v5H1zM4 4V2h6v6H8" /></svg></button>
                <button aria-label="关闭"><svg viewBox="0 0 12 12"><path d="M2 2l8 8M10 2l-8 8" /></svg></button>
              </div>
              <div class="mech">
                <template v-for="m in mechPalette" :key="m[0]"><div class="mh">{{ m[0] }}</div><button :aria-label="m[0]"><svg viewBox="0 0 20 20" v-html="icons[m[1]]" /></button></template>
              </div>
              <p class="note">双击标题栏就可以直接编辑</p>
            </div>
            <div class="tabs">
              <button v-for="(p, i) in ['M3 2v12M12 2v12L5 8z', 'M11 2v12L4 8z', 'M4 2v12l7-6z', 'M12 2v12M3 2v12l7-6z']" :key="i" class="nav" :aria-label="'布局导航' + i"><svg viewBox="0 0 15 16"><path :d="p" /></svg></button>
              <button class="tab on">模型</button><button class="tab">布局1</button><button class="tab">布局2</button>
            </div>
          </div>
          <div class="docks">
            <div class="strip mod">
              <button v-for="n in modifyTools" :key="n" :aria-label="n"><svg viewBox="0 0 20 20" v-html="icons[n]" /></button>
              <i class="grip"></i>
              <button v-for="n in orderTools" :key="n" :aria-label="n"><svg viewBox="0 0 20 20" v-html="icons[n]" /></button>
            </div>
            <div class="strip mod"><button v-for="n in mechTools" :key="n" :aria-label="n"><svg viewBox="0 0 20 20" v-html="icons[n]" /></button></div>
          </div>
        </div>
        <section class="cmd">
          <button class="cgrip" aria-label="关闭命令行">×</button>
          <div class="cbody">
            <div class="log"><p v-for="(l, i) in log" :key="i"><span v-for="(r, j) in runs(l)" :key="j" :class="{ han: isHan(r) }">{{ r }}</span></p></div>
            <label class="prompt"><span class="han">请选择超级编辑实体</span>:&nbsp;<input v-model="command" /></label>
          </div>
          <div class="cscroll"><svg viewBox="0 0 12 76"><path d="M2 13l4-4 4 4M2 63l4 4 4-4" fill="none" stroke="#8a929c" /><rect y="44" width="12" height="10" fill="#626a75" /></svg></div>
        </section>
      </div>

      <aside class="props">
        <div class="ptitle">特性<button aria-label="关闭特性"><svg viewBox="0 0 12 12"><path d="M2 2l8 8M10 2l-8 8" /></svg></button></div>
        <div class="psel">
          <div class="pcombo"><select aria-label="选择集"><option>无选择</option></select><i class="tri"></i></div>
          <button v-for="n in ['pick1', 'pick2', 'pick3']" :key="n" :aria-label="n"><svg viewBox="0 0 20 20" v-html="icons[n]" /></button>
        </div>
        <section v-for="g in props" :key="g.title" class="pg">
          <h3>{{ g.title }}<i class="tri"></i></h3>
          <table :class="{ dim: g.dim }">
            <tbody>
              <tr v-for="r in g.rows" :key="r[0]">
                <th scope="row">{{ r[0] }}</th>
                <td><i v-if="r[2]" :class="r[2]"></i>{{ r[1] }}</td>
              </tr>
            </tbody>
          </table>
        </section>
      </aside>
    </main>

    <footer class="status">
      <span class="coords">4238.0769, -453.3668, 0.0000</span>
      <button v-for="n in statusIcons" :key="n[0]" :class="{ on: n[1] }" :aria-label="n[0]"><svg viewBox="0 0 20 20" v-html="icons[n[0]]" /></button>
      <div class="sright">
        <button aria-label="注释比例"><svg viewBox="0 0 20 20" v-html="icons.person" /></button><span>1:1</span><i class="tri"></i>
        <button v-for="n in ['person2', 'person3', 'gear', 'expand']" :key="n" :aria-label="n"><svg viewBox="0 0 20 20" v-html="icons[n]" /></button>
      </div>
    </footer>

    <section class="dialog">
      <div class="dtitle">
        <svg viewBox="0 0 20 14"><rect x="0.500" y="0.500" width="19" height="13" fill="#e9ecea" stroke="#9a9fa0" /><rect x="2" y="2" width="9" height="10" fill="#3b8873" /><rect x="13" y="2" width="3" height="10" fill="#fff" /></svg>
        <span>属性高级编辑 主图幅 GB</span>
        <div class="dbtns">
          <button class="off" aria-label="最小化"><svg viewBox="0 0 14 14"><path d="M1 6.500h12" /></svg></button>
          <button aria-label="最大化"><svg viewBox="0 0 14 14"><rect x="1.500" y="1.500" width="11" height="11" rx="1" /></svg></button>
          <button aria-label="关闭"><svg viewBox="0 0 14 14"><path d="M1 1l12 12M13 1L1 13" /></svg></button>
        </div>
      </div>
      <div class="dmenu"><button v-for="m in dlgMenus" :key="m[0]">{{ m[0] }}<template v-if="m[1]">(<u>{{ m[1] }}</u>)</template></button></div>
      <div class="groove"></div>
      <div class="grid">
        <table>
          <thead><tr><th>显示名称</th><th>填写内容</th></tr></thead>
          <tbody>
            <tr v-for="r in fields" :key="r.k" :class="{ on: r.on }">
              <th scope="row">{{ r.k }}</th>
              <td>
                <div class="cell">
                  <template v-if="r.d"><select :aria-label="r.k"><option>{{ r.v }}</option></select><span class="drop"><i class="tri"></i></span></template>
                  <input v-else v-model="r.v" :aria-label="r.k" />
                </div>
              </td>
            </tr>
          </tbody>
        </table>
        <div class="gutter"></div>
        <div class="track"><i></i></div>
      </div>
      <div class="extract">
        <button><svg viewBox="0 0 30 28"><rect x="3.500" y="4.500" width="25" height="23" fill="#cfe0fb" stroke="#4a6ea8" /><rect x="4" y="5" width="24" height="5" fill="#5f8fdc" /><path d="M4 15.500h24M4 21.500h24M12.500 10v17M20.500 10v17" stroke="#4a6ea8" /><circle cx="8" cy="8" r="7.500" fill="#4aa82e" stroke="#2c7a18" /><path d="M8 3l5 5h-3v4H6V8H3z" fill="#1d5c10" /></svg>提取表数据</button>
        <button><svg viewBox="0 0 30 28"><rect x="3.500" y="4.500" width="25" height="23" fill="#c3d5f7" stroke="#5a7fc0" /><circle cx="8" cy="8" r="7.500" fill="#4aa82e" stroke="#2c7a18" /><path d="M8 3l5 5h-3v4H6V8H3z" fill="#1d5c10" /></svg>提取块数据</button>
        <button aria-label="结构数据"><svg viewBox="0 0 30 28"><rect x="4.500" y="1.500" width="14" height="12" fill="#f3e27c" stroke="#4a6ea8" /><path d="M5 3.500h13" stroke="#d8402e" stroke-width="3" /><path d="M5 11h13" stroke="#5cae3a" stroke-width="3" /><path d="M12 14v4H6v2" fill="none" stroke="#4a6ea8" /><rect x="1.500" y="20.500" width="8" height="6" fill="#c3d5f7" stroke="#4a6ea8" /></svg></button>
      </div>
      <div class="dfoot">
        <label><input type="checkbox" disabled />更新所有同名块</label>
        <button class="ok"><svg viewBox="0 0 26 26"><path d="M2 14l5-3 3 5Q15 6 24 2 15 12 11 24H8z" fill="#12a012" stroke="#064a06" /></svg>确定</button>
      </div>
      <svg class="ghost" viewBox="0 0 585 665" aria-hidden="true"><path d="M288 23l16 16M304 23l-16 16M297 143l16 16M313 143l-16 16M462 263l16 16M478 263l-16 16M247 323l16 16M263 323l-16 16M303 383l16 16M319 383l-16 16" stroke="#fff" stroke-width="2" /><path d="M392 28v40M428 28v40M446 28v40M466 28v30M510 28v16M540 28v16" stroke="#faf9f0" /><path d="M582 656v1M582 651v1M577 656v1M582 661v1M577 661v1M572 661v1" stroke="#a8a8a8" stroke-width="3" /></svg>
    </section>

    <div class="ctx">
      <button v-for="c in ctxTop" :key="c[0]" :disabled="c[0] === '粘贴'"><svg viewBox="0 0 16 14" v-html="ctxIcons[c[3]]" /><span>{{ c[0] }}<template v-if="c[1]">(<u>{{ c[1] }}</u>)</template></span><kbd>{{ c[2] }}</kbd></button>
      <hr />
      <button class="sub"><i></i><span>资源操作(<u>S</u>)</span><svg class="more" viewBox="0 0 6 10"><path d="M0 0l6 5-6 5z" /></svg></button>
      <hr />
      <button v-for="c in ctxBottom" :key="c"><i></i><span>{{ c }}</span></button>
    </div>
    <div class="redbox"></div>
    <svg class="redarrow" viewBox="628 640 170 24"><path d="M628 650l19-9-5 6 18 1 137 13v2l-137-6-19-4 3 8z" fill="#fe2414" /></svg>
    <button class="float" aria-label="展开"><svg viewBox="0 0 10 16"><path d="M8 3L3 8l5 5" fill="none" stroke="#fff" stroke-width="2" /></svg></button>
  </div>
</template>

<style>
body { margin: 0; background: #343b45; }
</style>

<style scoped>
* { box-sizing: border-box; }
.app { position: relative; display: flex; flex-direction: column; height: 100vh; min-height: 900px; overflow: hidden; background: #343b45; color: #e6eaee; font: 15px/20px "Noto Sans", "Noto Sans CJK SC", sans-serif; }
button { display: inline-flex; align-items: center; justify-content: center; padding: 0; border: 0; background: none; color: inherit; font: inherit; flex: none; }
select, input { font: inherit; color: inherit; background: none; border: 0; padding: 0; margin: 0; min-width: 0; outline: 0; border-radius: 0; }
select { appearance: none; }
svg { flex: none; display: block; }
table { border-collapse: separate; border-spacing: 0; table-layout: fixed; }
.tri { flex: none; width: 0; height: 0; border: 5px solid transparent; border-top: 5px solid #d3dae0; border-bottom: 0; }

.title { position: relative; display: flex; align-items: center; flex: none; height: 38px; padding-left: 4px; background: #fff; border-top: 1px solid #b5b5b5; color: #8a8a8a; font-size: 16px; white-space: pre; }
.cjk { font-size: 15px; }
.logo { width: 20px; height: 20px; margin-right: 6px; }
.winbtns { display: flex; margin-left: auto; }
.winbtns button { width: 58px; height: 36px; }
.winbtns svg, .dbtns svg { width: 14px; height: 14px; fill: none; stroke: #777; }
.pill { position: absolute; left: 313px; top: 0; width: 62px; height: 12px; padding: 2px; border: 2px solid #777; border-radius: 6px; background: #fff; }
.pill i { display: block; width: 34px; height: 4px; background: #f0a868; border-radius: 2px; }
.menubar { display: flex; align-items: center; gap: 29px; flex: none; height: 26px; padding-left: 8px; background: #2c3640; color: #f4f6f8; border-bottom: 2px solid #c3cbd4; }

.bars { flex: none; height: 55px; background: #343b45; border-bottom: 2px solid #3a424d; }
.bar { display: flex; align-items: center; width: max-content; height: 26px; padding: 0 3px; background: #414957; border-bottom: 1px solid #8f9aa8; }
.bar + .bar { border-bottom: 0; padding-left: 1px; }
.tb { width: 24px; height: 24px; }
.tb.wide { width: 27px; }
.tb svg, .history svg { width: 17px; height: 17px; }
.sep { width: 3px; height: 19px; margin: 0 3px; border: solid #a3adb9; border-width: 0 1px; }
.sep.far { margin: 0 4px; }
.history { display: flex; align-items: center; gap: 2px; width: 60px; height: 24px; padding: 0 2px; background: #232832; }
.combo { display: flex; align-items: center; height: 23px; padding: 0 6px 0 3px; background: #222733; border-bottom: 1px solid #8a94a2; color: #b4bcc5; }
.combo select { flex: 1; height: 20px; line-height: 20px; }
.std { width: 98px; }
.std select { font: 13px/20px "Liberation Mono", monospace; }
.layer { width: 300px; padding-left: 3px; gap: 1px; }
.layer svg { width: 16px; height: 16px; }
.sw { flex: none; width: 11px; height: 12px; margin: 0 4px; background: #fff; }
.color { width: 156px; }
.ltype { width: 170px; }
.lwt { width: 121px; }
.plot { width: 119px; padding-left: 8px; }
.ln { flex: none; width: 62px; height: 1px; margin: 0 6px 0 4px; background: #fff; }
.ln.short { width: 36px; }

.main { display: flex; flex: 1; min-height: 0; }
.left { display: flex; flex-direction: column; flex: 1; min-width: 0; }
.work { display: flex; flex: 1; min-height: 0; }
.dock { flex: none; width: 26px; border-right: 1px solid #262b33; }
.strip { position: relative; padding-top: 7px; border-top: 2px solid #a3adb9; background: #414957; margin-top: 2px; }
.strip::before { content: ""; display: block; height: 2px; margin-top: -5px; background: #a3adb9; }
.strip button { display: flex; width: 100%; height: 23px; }
.strip svg { width: 17px; height: 17px; }
.draw { width: 23px; }
.draw button { width: 17px; }
.docks { display: flex; gap: 1px; align-items: flex-start; flex: none; width: 62px; padding-left: 2px; background: #343b45; }
.mod { width: 27px; border-left: 1px solid #a3adb9; }
.grip { display: block; height: 6px; margin: 3px 0; border: solid #a3adb9; border-width: 2px 0; }
.center { display: flex; flex-direction: column; flex: 1; min-width: 0; }
.docbar { display: flex; flex: none; height: 27px; background: #2c3036; }
.dd { width: 28px; height: 27px; background: #505a66; padding-left: 20px; }
.doctab { margin: 4px 0 0 8px; width: 176px; height: 23px; background: #54637a; border-radius: 6px 12px 0 0; }
.arrows { display: flex; gap: 1px; margin-left: auto; }
.arrows button { width: 14px; background: #4a5360; }
.arrows svg { width: 12px; height: 16px; fill: none; stroke: #14171b; stroke-width: 1.500; }
.canvas { position: relative; flex: 1; overflow: hidden; background: #1b1e23; }
.drawing { position: absolute; left: 0; top: 0; }
.cadtext { fill: #27e027; opacity: .75; text-anchor: middle; font-family: "Liberation Sans", "Noto Sans CJK SC", sans-serif; }
.axis { fill: #fff; font: 300 30px Lato, sans-serif; text-anchor: middle; }
.docbtns { position: absolute; top: 7px; right: 9px; display: flex; gap: 6px; }
.docbtns svg, .ptitle svg { width: 14px; height: 14px; fill: none; stroke: #eef1f4; stroke-width: 2; }
.mech { position: absolute; left: 9px; top: -4px; width: 60px; background: #4a5262; padding-bottom: 7px; }
.mh { height: 30px; padding-left: 6px; line-height: 28px; background: #363c46; color: #fff; }
.mech button { display: flex; width: 44px; height: 30px; }
.mech svg { width: 17px; height: 17px; }
.note { position: absolute; left: 696px; top: 646px; margin: 0; color: #fe2414; font: 63px/72px "Noto Sans CJK SC", sans-serif; white-space: nowrap; }
.tabs { display: flex; align-items: flex-start; flex: none; height: 23px; background: #2c3036; border-bottom: 2px solid #353c45; color: #fff; }
.nav { width: 18px; height: 19px; margin-right: 2px; background: #3a414c; }
.nav svg { width: 13px; height: 14px; fill: #9aa3ae; stroke: #9aa3ae; }
.tab { height: 19px; width: 62px; margin-right: -6px; background: #414957; clip-path: polygon(0 0, 100% 0, 86% 100%, 14% 100%); }
.tab.on { width: 60px; font-weight: 700; background: #4f6b8c; }

.cmd { display: flex; flex: none; height: 98px; margin-right: 4px; background: #2c3036; color: #b6bcc4; }
.cgrip { width: 20px; background: #434b5b; align-items: flex-start; padding: 0 6px 0 0; color: #7a8391; font-size: 16px; line-height: 16px; }
.cbody { flex: 1; font: 13px/19px "Liberation Mono", "Noto Sans CJK SC", monospace; }
.log { height: 76px; border-bottom: 1px solid #5d646d; overflow: hidden; }
.log p { display: flex; align-items: center; margin: 0; height: 19px; line-height: 18px; white-space: pre; }
.han { font: 16px/16px "Noto Sans CJK SC", sans-serif; }
.prompt { display: flex; align-items: center; height: 20px; }
.prompt input { flex: 1; height: 18px; border-left: 1px solid #e6eaee; }
.cscroll { flex: none; width: 16px; padding-top: 1px; }
.cscroll svg { width: 12px; height: 76px; }

.props { flex: none; width: 222px; margin-top: 2px; background: #434b57; border-left: 1px solid #2b3038; }
.ptitle { display: flex; align-items: center; justify-content: space-between; height: 24px; padding: 0 8px 0 9px; background: #505a67; font-size: 16px; color: #f2f5f8; }
.psel { display: flex; gap: 4px; height: 58px; padding: 7px 8px 0 9px; }
.pcombo { display: flex; align-items: center; flex: 1; height: 28px; padding: 4px 3px 0 3px; border-bottom: 1px solid #5f6875; }
.pcombo select { flex: 1; height: 22px; }
.pcombo .tri { border-width: 6px 6px 0; border-top-color: #fff; }
.psel button { width: 21px; height: 21px; background: #49525f; }
.psel svg { width: 18px; height: 18px; }
.pg { width: 181px; margin: 0 0 24px 7px; }
.pg h3 { display: flex; align-items: center; justify-content: space-between; height: 26px; margin: 0; padding: 0 11px 1px 6px; border-bottom: 1px solid #eef1f4; font: 700 15px/20px "Noto Sans CJK SC", sans-serif; }
.pg table { width: 100%; }
.pg th, .pg td { height: 25px; padding: 0 0 0 5px; border-bottom: 1px solid #566170; text-align: left; font-weight: 400; line-height: 24px; white-space: nowrap; overflow: hidden; }
.pg th { width: 68px; border-right: 1px solid #566170; }
.pg td { padding-left: 3px; }
.dim td { color: #98a1ab; }
.pg .swatch { display: inline-block; width: 11px; height: 11px; margin-right: 3px; border: 1px solid #000; background: #fff; }
.pg td .line, .pg td .thin { display: inline-block; width: 45px; height: 1px; margin-right: 3px; vertical-align: 5px; background: #e6eaee; }
.pg td .thin { width: 40px; }

.status { display: flex; flex: none; align-items: flex-start; gap: 4px; height: 21px; padding: 3px 0 0 5px; background: #2f353f; overflow: hidden; }
.coords { width: 276px; font-size: 12px; line-height: 22px; color: #f2f5f8; }
.status button { width: 20px; height: 20px; }
.status button.on { background: #41607f; border: 1px solid #6fb4e8; }
.status svg { width: 16px; height: 16px; }
.sright { display: flex; align-items: center; gap: 2px; margin-left: auto; padding-right: 22px; font-size: 12px; }
.sright .tri { margin-right: 6px; }

.dialog { position: absolute; left: 71px; top: 126px; width: 584px; height: 665px; overflow: hidden; border-radius: 8px; background: #e4e4e4; color: #111; }
.dtitle { display: flex; align-items: center; height: 36px; padding-left: 9px; background: #f4f4f5; }
.dtitle > svg { width: 19px; height: 14px; margin-right: 6px; }
.dbtns { display: flex; margin-left: auto; padding-right: 1px; }
.dbtns button { width: 59px; }
.dbtns svg { stroke: #111; stroke-width: 1.200; }
.dbtns .off svg { stroke: #b5b5b5; }
.dmenu { display: flex; align-items: center; gap: 19px; height: 26px; padding: 0 9px 1px; background: #f4f4f5; }
.groove { height: 9px; border-bottom: 1px solid #c6c6c6; }
.grid { display: flex; height: 497px; margin: 5px 2px 0 10px; border-top: 2px solid #6a6a6a; border-left: 2px solid #8a8a8a; overflow: hidden; }
.grid table { width: 521px; flex: none; }
.grid th, .grid td { height: 30px; padding: 0; font-weight: 400; text-align: left; border-bottom: 1px solid #ababab; background: #f2f2f3; }
.grid thead th { height: 29px; text-align: center; background: #e4e4e4; border-right: 2px solid #777; }
.grid thead th:last-child { border-right: 0; }
.grid thead th:first-child { width: 85px; padding-left: 6px; border-bottom-color: #555; }
.grid tbody th { padding-left: 4px; background: #e5e5e5; border-right: 1px solid #555; border-bottom: 1px solid #555; }
.cell { display: flex; height: 29px; padding-left: 4px; }
.cell select, .cell input { flex: 1; height: 27px; }
.drop { display: flex; align-items: center; justify-content: center; width: 21px; height: 21px; border: 1px solid #f8f8f8; border-right: 2px solid #888; border-bottom: 2px solid #888; background: #e6e6e6; }
.drop .tri { border-width: 5px 5px 0; border-top-color: #000; }
.on .cell { margin: 1px; height: 27px; background: #0474ce; }
.gutter { width: 26px; flex: none; background: #999; }
.track { flex: 1; padding: 20px 0 0 8px; }
.track i { display: block; width: 6px; height: 156px; background: #858585; }
.extract { display: flex; height: 42px; margin: 0 2px; padding: 2px 0 0 14px; border-bottom: 1px solid #d2d2d2; }
.extract button { justify-content: flex-start; width: 180px; height: 42px; }
.extract svg { width: 30px; height: 28px; margin-right: 11px; }
.dfoot { display: flex; justify-content: space-between; height: 50px; padding: 10px 227px 0 26px; }
.dfoot label { display: flex; align-items: center; height: 50px; color: #7c7c7c; }
.dfoot input { appearance: none; width: 16px; height: 16px; margin-right: 5px; border: 1px solid #c2c2c2; border-radius: 3px; background: #eee; }
.ok { width: 108px; height: 36px; gap: 23px; padding-right: 14px; border: 1px solid #000; box-shadow: inset 1px 1px #fff, inset -2px -2px #8a8a8a; }
.ok svg { width: 26px; height: 26px; }
.ghost { position: absolute; left: 0; top: 0; width: 585px; height: 665px; pointer-events: none; fill: none; }

.ctx { position: absolute; left: 461px; top: 605px; width: 180px; padding: 1px 3px 3px 4px; background: #f0f0f0; border: solid #fff; border-width: 1px 0 0 1px; box-shadow: inset -2px -2px #8a8a8a; color: #111; }
.ctx button { display: flex; justify-content: flex-start; width: 100%; height: 21px; padding-right: 14px; }
.ctx button:disabled { color: #8f8f8f; }
.ctx button svg, .ctx button > i { width: 16px; height: 14px; margin-right: 6px; }
.ctx button svg.more { width: 6px; height: 10px; margin: 0 -6px 0 auto; fill: #000; }
.ctx kbd { margin-left: auto; font: inherit; }
.ctx hr { height: 1px; margin: 2px 2px 3px; border: 0; background: #a0a0a0; }
.redbox { position: absolute; left: 463px; top: 718px; width: 175px; height: 122px; border: 4px solid #fe2414; border-radius: 5px; }
.redarrow { position: absolute; left: 628px; top: 640px; width: 170px; height: 24px; }
.float { position: absolute; right: -22px; top: 780px; width: 40px; height: 40px; padding-right: 14px; border-radius: 50%; background: #2a6ff0; }
.float svg { width: 10px; height: 16px; }
</style>
